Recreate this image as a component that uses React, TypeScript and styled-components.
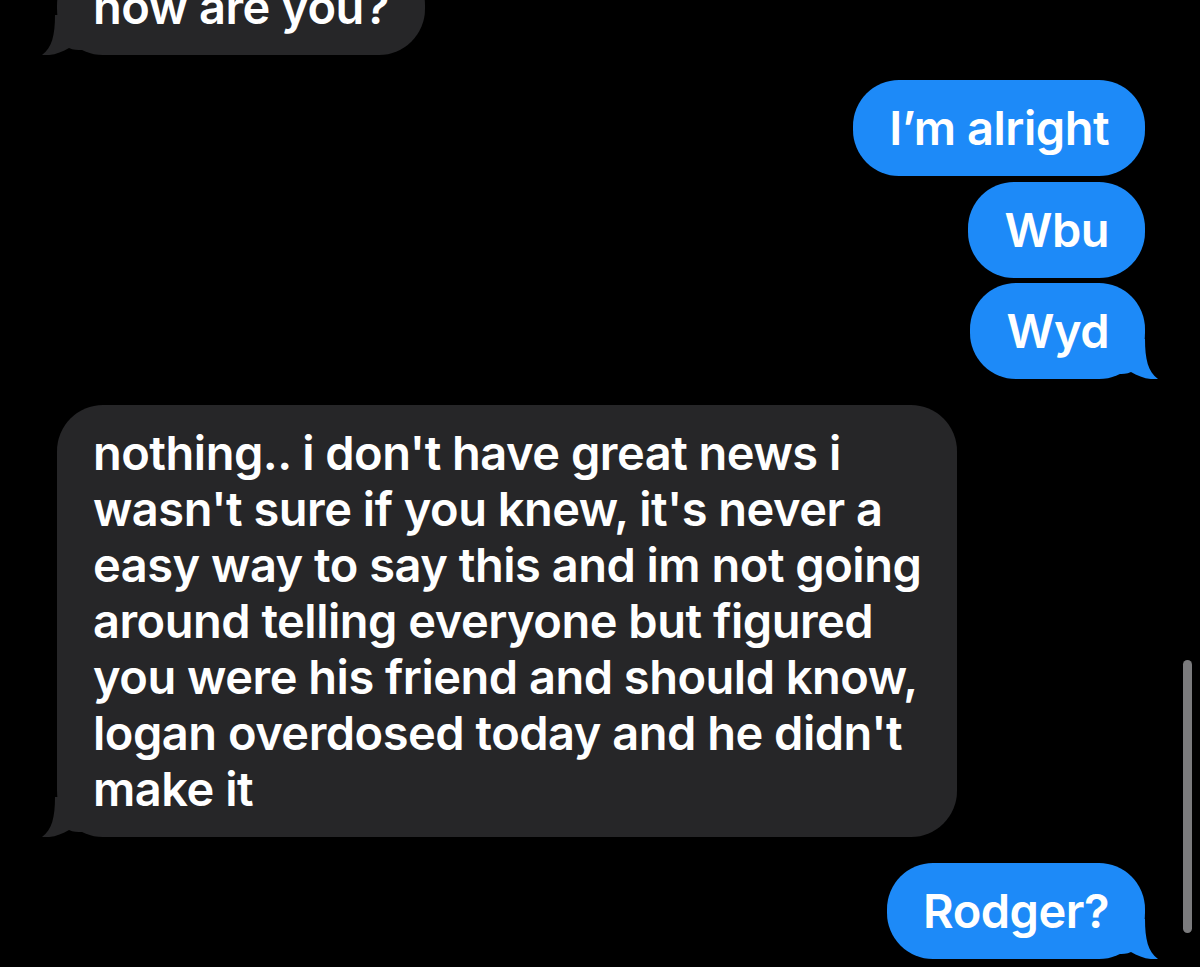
import styled, { createGlobalStyle } from 'styled-components';

const GlobalStyle = createGlobalStyle`
  html, body {
    margin: 0;
    padding: 0;
    background: #000000;
    overflow: hidden;
  }
`;

const Screen = styled.div`
  width: 1200px;
  height: 967px;
  background: #000000;
  overflow: hidden;
  position: relative;
  font-family: Inter, 'Liberation Sans', Arial, sans-serif;
`;

const Thread = styled.div`
  display: flex;
  flex-direction: column;
  margin-top: -41px;
  padding: 0 55px 0 57px;
`;

const Row = styled.div<{ $mine?: boolean; $gap: number }>`
  display: flex;
  justify-content: ${p => (p.$mine ? 'flex-end' : 'flex-start')};
  margin-top: ${p => p.$gap}px;
`;

const Bubble = styled.div<{ $mine?: boolean }>`
  position: relative;
  box-sizing: border-box;
  padding: 20px 36px;
  border-radius: 46px;
  background: ${p => (p.$mine ? '#1d8af8' : '#262628')};
  color: #ffffff;
  font-size: 47px;
  font-weight: 600;
  line-height: 56px;
  letter-spacing: -0.5px;
  white-space: nowrap;
`;

const Tail = styled.svg<{ $mine?: boolean }>`
  position: absolute;
  bottom: 0;
  width: 40px;
  height: 40px;
  ${p => (p.$mine ? 'right: -13px;' : 'left: -15px; transform: scaleX(-1);')}
`;

const Scrollbar = styled.div`
  position: absolute;
  left: 1183px;
  top: 660px;
  width: 9px;
  height: 273px;
  border-radius: 5px;
  background: #7b7b7d;
`;

const BubbleTail = ({ mine }: { mine?: boolean }) => (
  <Tail $mine={mine} viewBox="0 0 40 40">
    <path
      d="M0 0 L27 0 C27 20 30 33 40 40 C31 41 21 38 13 33 C9 35 4 35 0 35 Z"
      fill={mine ? '#1d8af8' : '#262628'}
    />
  </Tail>
);

type Msg = { text: string[]; mine?: boolean; gap: number; tail?: boolean };

const messages: Msg[] = [
  { text: ['how are you?'], gap: 0, tail: true },
  { text: ['I’m alright'], mine: true, gap: 25 },
  { text: ['Wbu'], mine: true, gap: 6 },
  { text: ['Wyd'], mine: true, gap: 5, tail: true },
  {
    text: [
      'nothing.. i don\'t have great news i',
      'wasn\'t sure if you knew, it\'s never a',
      'easy way to say this and im not going',
      'around telling everyone but figured',
      'you were his friend and should know,',
      'logan overdosed today and he didn\'t',
      'make it',
    ],
    gap: 26,
    tail: true,
  },
  { text: ['Rodger?'], mine: true, gap: 26, tail: true },
];

const App = () => {
  return (
    <Screen>
      <GlobalStyle />
      <Thread>
        {messages.map((m, i) => (
          <Row key={i} $mine={m.mine} $gap={m.gap}>
            <Bubble $mine={m.mine}>
              {m.text.map((line, j) => (
                <div key={j}>{line}</div>
              ))}
              {m.tail && <BubbleTail mine={m.mine} />}
            </Bubble>
          </Row>
        ))}
      </Thread>
      <Scrollbar />
    </Screen>
  );
};

export default App;
